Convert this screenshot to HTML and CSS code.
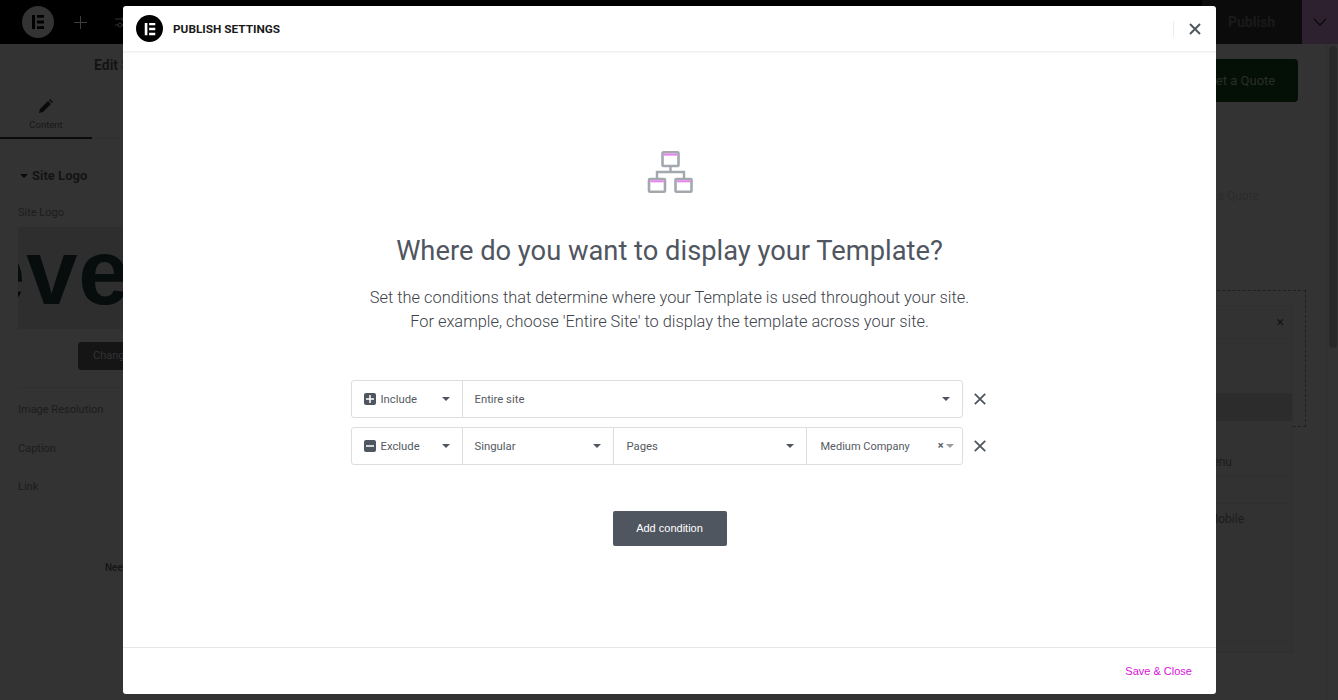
FILE: index.html
```html
<!DOCTYPE html>
<html lang="en">
<head>
    <meta charset="UTF-8">
    <meta name="viewport" content="width=device-width, initial-scale=1.0">
    <title>Publish Settings</title>
    <link rel="stylesheet" href="styles.css">
</head>
<body>
    <!-- Editor behind the dialog -->
    <header class="topbar">
        <div class="topbar-left">
            <span class="editor-logo">
                <svg width="16" height="16" viewBox="0 0 16 16"><path fill="#000" d="M2 1h3v14H2zM7 1h7v2.800H7zM7 6.600h7v2.800H7zM7 12.200h7V15H7z"/></svg>
            </span>
            <svg class="topbar-plus" width="13" height="13" viewBox="0 0 13 13"><path stroke="#3c3c3c" d="M6.500 0v13M0 6.500h13"/></svg>
            <svg class="topbar-sliders" width="14" height="12" viewBox="0 0 14 12"><path stroke="#333" fill="none" d="M0 3h14M0 9h14"/><circle cx="9" cy="3" r="2" fill="#000" stroke="#333"/><circle cx="5" cy="9" r="2" fill="#000" stroke="#333"/></svg>
        </div>
        <div class="topbar-right">
            <div class="publish">Publish</div>
            <div class="publish-more">
                <svg width="14" height="8" viewBox="0 0 14 8"><path d="M1 1l6 6 6-6" fill="none" stroke="#0a0a0a" stroke-width="1.300"/></svg>
            </div>
        </div>
    </header>

    <div class="editor">
        <aside class="panel">
            <div class="panel-title">Edit Site Logo</div>
            <div class="panel-tabs">
                <div class="tab">
                    <svg width="14" height="14" viewBox="0 0 14 14"><path fill="#0a0a0a" d="M0 14l1-4 8-8 3 3-8 8zM10 1l1-1 3 3-1 1z"/></svg>
                    <span>Content</span>
                </div>
            </div>
            <div class="section-title"><span class="caret-dark"></span>Site Logo</div>
            <div class="control-label">Site Logo</div>
            <div class="logo-preview"><span>eve</span></div>
            <div class="change-btn">Change</div>
            <div class="control-list">
                <div>Image Resolution</div>
                <div>Caption</div>
                <div>Link</div>
            </div>
            <div class="need-help">Need Help</div>
        </aside>

        <main class="canvas">
            <div class="quote-btn">Get a Quote</div>
            <div class="quote-ghost">Get a Quote</div>
            <div class="drop-zone"></div>
            <div class="menu-card">
                <div class="card-close">&times;</div>
                <div class="card-row card-head"></div>
                <div class="card-row card-highlight"></div>
                <div class="card-row card-menu">Menu</div>
                <div class="card-row card-blank"></div>
                <div class="card-row card-mobile">Mobile</div>
            </div>
            <div class="scroll-track"><div class="scroll-thumb"></div></div>
        </main>
    </div>

    <!-- Publish settings dialog -->
    <div class="modal">
        <div class="modal-header">
            <span class="modal-logo">
                <svg width="14" height="14" viewBox="0 0 16 16"><path fill="#fff" d="M2 1h3v14H2zM7 1h7v2.800H7zM7 6.600h7v2.800H7zM7 12.200h7V15H7z"/></svg>
            </span>
            <span class="modal-title">PUBLISH SETTINGS</span>
            <span class="modal-divider"></span>
            <svg class="modal-close" width="12" height="12" viewBox="0 0 12 12"><path d="M1 1l10 10M11 1L1 11" stroke="#4f565f" stroke-width="2"/></svg>
        </div>

        <div class="modal-body">
            <svg class="sitemap" width="46" height="42" viewBox="0 0 46 42">
                <path d="M23.500 15v6M10 27v-6h27v6" fill="none" stroke="#a3a7ae" stroke-width="2.400"/>
                <g fill="#fff" stroke="#a3a7ae" stroke-width="2.600">
                    <rect x="15.500" y="1.300" width="16" height="13.700" rx="1"/>
                    <rect x="2" y="28" width="16" height="12.700" rx="1"/>
                    <rect x="28.500" y="28" width="16" height="12.700" rx="1"/>
                </g>
                <g fill="#e87ff0">
                    <rect x="16.800" y="2.600" width="13.400" height="2"/>
                    <rect x="3.300" y="29.300" width="13.400" height="2"/>
                    <rect x="29.800" y="29.300" width="13.400" height="2"/>
                </g>
            </svg>
            <h1 class="modal-heading">Where do you want to display your Template?</h1>
            <p class="modal-text">Set the conditions that determine where your Template is used throughout your site.<br>For example, choose 'Entire Site' to display the template across your site.</p>

            <div class="conditions">
                <div class="condition">
                    <div class="condition-box">
                        <div class="field field-type">
                            <span class="type-icon">
                                <svg width="8" height="8" viewBox="0 0 8 8"><path d="M4 0v8M0 4h8" stroke="#fff" stroke-width="1.500"/></svg>
                            </span>
                            <span class="field-text">Include</span>
                            <span class="caret"></span>
                        </div>
                        <div class="field field-grow">
                            <span class="field-text">Entire site</span>
                            <span class="caret"></span>
                        </div>
                    </div>
                    <svg class="condition-remove" width="12" height="12" viewBox="0 0 12 12"><path d="M.8.800l10.400 10.400M11.200.800L.8 11.200" stroke="#4f565f" stroke-width="1.800"/></svg>
                </div>
                <div class="condition">
                    <div class="condition-box">
                        <div class="field field-type">
                            <span class="type-icon">
                                <svg width="8" height="8" viewBox="0 0 8 8"><path d="M0 4h8" stroke="#fff" stroke-width="1.500"/></svg>
                            </span>
                            <span class="field-text">Exclude</span>
                            <span class="caret"></span>
                        </div>
                        <div class="field field-singular">
                            <span class="field-text">Singular</span>
                            <span class="caret"></span>
                        </div>
                        <div class="field field-pages">
                            <span class="field-text">Pages</span>
                            <span class="caret"></span>
                        </div>
                        <div class="field field-company">
                            <span class="field-text">Medium Company</span>
                            <span class="clear-x">&times;</span>
                            <span class="caret caret-light"></span>
                        </div>
                    </div>
                    <svg class="condition-remove" width="12" height="12" viewBox="0 0 12 12"><path d="M.8.800l10.400 10.400M11.200.800L.8 11.200" stroke="#4f565f" stroke-width="1.800"/></svg>
                </div>
            </div>

            <button class="add-condition">Add condition</button>
        </div>

        <div class="modal-footer">
            <a class="save-close">Save &amp; Close</a>
        </div>
    </div>
</body>
</html>
```

FILE: styles.css
```css
* {
    box-sizing: border-box;
}

html, body {
    height: 100%;
}

body {
    margin: 0;
    overflow: hidden;
    background: #333333;
    font-family: Roboto, sans-serif;
    color: #141414;
}

/* top bar */
.topbar {
    height: 44px;
    background: #000;
    display: flex;
    justify-content: space-between;
}

.topbar-left {
    display: flex;
    align-items: center;
    padding-left: 22px;
}

.editor-logo {
    width: 32px;
    height: 32px;
    border-radius: 50%;
    background: #333;
    display: flex;
    align-items: center;
    justify-content: center;
}

.topbar-plus {
    margin-left: 20px;
}

.topbar-sliders {
    margin-left: 28px;
}

.topbar-right {
    display: flex;
}

.publish {
    width: 100px;
    background: #0b0b0b;
    color: #1a1a1a;
    font-weight: 700;
    font-size: 14px;
    line-height: 44px;
    padding-left: 26px;
}

.publish-more {
    width: 36px;
    background: #2d2130;
    display: flex;
    align-items: center;
    justify-content: center;
}

/* editor behind the dialog */
.editor {
    height: 656px;
    display: flex;
}

.panel {
    width: 300px;
    flex-shrink: 0;
}

.panel-title {
    padding: 13px 0 0 94px;
    height: 48px;
    font-size: 14px;
    font-weight: 700;
    line-height: 17px;
}

.panel-tabs {
    height: 47px;
    border-bottom: 1px solid #2f2f2f;
}

.tab {
    width: 92px;
    height: 47px;
    border-bottom: 2px solid #0a0a0a;
    display: flex;
    flex-direction: column;
    align-items: center;
    padding-top: 7px;
    font-size: 9.500px;
    gap: 6px;
    color: #181818;
}

.section-title {
    display: flex;
    align-items: center;
    margin: 29px 0 0 20px;
    font-size: 13px;
    font-weight: 700;
    line-height: 16px;
}

.caret-dark {
    width: 0;
    height: 0;
    border: 4px solid transparent;
    border-top: 4px solid #0a0a0a;
    border-bottom: 0;
    margin-right: 4px;
}

.control-label {
    margin: 22px 0 0 18px;
    font-size: 11px;
    line-height: 14px;
    color: #1c1c1c;
}

.logo-preview {
    margin: 7px 0 0 18px;
    height: 102px;
    background: #2e2e2e;
    overflow: hidden;
    font-family: "Liberation Sans", sans-serif;
    font-weight: 700;
    font-size: 92px;
    line-height: 90px;
    letter-spacing: 1px;
    color: #070d0d;
    white-space: nowrap;
}

.logo-preview span {
    margin-left: -44px;
    display: block;
}

.change-btn {
    margin: 13px 0 0 78px;
    width: 90px;
    height: 28px;
    background: #151516;
    border-radius: 3px;
    color: #333;
    font-size: 11px;
    line-height: 28px;
    padding-left: 15px;
}

.control-list {
    margin: 17px 0 0 18px;
    border-top: 1px solid #2f2f2f;
    padding-top: 15px;
    font-size: 11px;
    line-height: 14px;
    color: #1c1c1c;
    display: flex;
    flex-direction: column;
    gap: 24.500px;
}

.need-help {
    margin: 67px 0 0 105px;
    font-size: 10px;
    font-weight: 500;
    line-height: 14px;
}

.canvas {
    flex: 1;
    position: relative;
}

.quote-btn {
    position: absolute;
    right: 40px;
    top: 15px;
    width: 130px;
    height: 43px;
    background: #041006;
    border-radius: 4px;
    color: #2a2d2a;
    font-size: 13px;
    line-height: 43px;
    padding-left: 39px;
}

.quote-ghost {
    position: absolute;
    right: 79px;
    top: 145px;
    font-size: 12px;
    color: #2c2c2c;
}

.drop-zone {
    position: absolute;
    right: 32px;
    top: 246px;
    width: 300px;
    height: 137px;
    border: 1px dashed #1f1f1f;
}

.menu-card {
    position: absolute;
    right: 45px;
    top: 261px;
    width: 300px;
    height: 348px;
    background: #323232;
    border: 1px solid #2f2f2f;
    border-radius: 3px;
    font-size: 12px;
}

.card-close {
    position: absolute;
    right: 8px;
    top: 9px;
    font-size: 14px;
    line-height: 14px;
    color: #141414;
}

.card-row {
    position: absolute;
    left: 0;
    right: 0;
    border-bottom: 1px solid #2f2f2f;
    text-align: right;
}

.card-head {
    top: 0;
    height: 33px;
}

.card-highlight {
    top: 87px;
    height: 28px;
    background: #2c2c2c;
    border-bottom: 0;
}

.card-menu {
    top: 149px;
    height: 21px;
    padding-right: 60px;
    color: #1c1c1c;
}

.card-blank {
    top: 170px;
    height: 28px;
}

.card-mobile {
    top: 206px;
    height: 130px;
    padding-right: 48px;
    color: #1c1c1c;
}

.scroll-track {
    position: absolute;
    right: 0;
    top: 0;
    width: 12px;
    height: 100%;
    border-left: 1px solid #2e2e2e;
}

.scroll-thumb {
    margin: 2px 1px 0 2px;
    height: 302px;
    background: #282828;
    border-radius: 4px;
}

/* dialog */
.modal {
    position: absolute;
    left: 123px;
    top: 6px;
    width: 1093px;
    height: 688px;
    background: #fff;
    border-radius: 3px;
    display: flex;
    flex-direction: column;
    color: #4f565f;
}

.modal-header {
    height: 46px;
    flex-shrink: 0;
    border-bottom: 1px solid #f0f0f0;
    box-shadow: 0 1px 1px rgba(0, 0, 0, 0.03);
    display: flex;
    align-items: center;
    padding: 0 15px 0 13px;
}

.modal-logo {
    width: 27px;
    height: 27px;
    border-radius: 50%;
    background: #000;
    display: flex;
    align-items: center;
    justify-content: center;
}

.modal-title {
    margin: 1px 0 0 10px;
    font-size: 11.800px;
    font-weight: 700;
    color: #1a1a1a;
    flex: 1;
}

.modal-divider {
    width: 1px;
    height: 16px;
    background: #ececec;
    margin-right: 15px;
}

.modal-body {
    flex: 1;
    display: flex;
    flex-direction: column;
    align-items: center;
    padding-top: 99px;
}

.sitemap {
    display: block;
}

.modal-heading {
    margin: 42px 0 0;
    font-size: 27.300px;
    line-height: 33px;
    font-weight: 400;
    color: #4f565f;
}

.modal-text {
    margin: 18px 0 0;
    font-size: 16.400px;
    line-height: 24px;
    font-weight: 300;
    text-align: center;
    color: #3d434a;
}

.conditions {
    margin-top: 46px;
    display: flex;
    flex-direction: column;
    gap: 9px;
}

.condition {
    display: flex;
    align-items: center;
    gap: 11px;
    padding-right: 3px;
}

.condition-box {
    width: 612px;
    height: 38px;
    border: 1px solid #dcdde0;
    border-radius: 3px;
    display: flex;
}

.field {
    display: flex;
    align-items: center;
    padding: 0 12px;
    border-right: 1px solid #dcdde0;
    font-size: 11.300px;
    color: #555a61;
}

.field:last-child {
    border-right: 0;
}

.field-text {
    flex: 1;
    white-space: nowrap;
}

.field-type {
    width: 111px;
}

.field-grow {
    flex: 1;
}

.field-singular {
    width: 151px;
}

.field-pages {
    width: 193px;
    padding-left: 13px;
}

.field-company {
    flex: 1;
    padding-right: 8px;
    padding-left: 14px;
    font-size: 11px;
}

.type-icon {
    width: 12px;
    height: 12px;
    border-radius: 2px;
    background: #4f565f;
    display: flex;
    align-items: center;
    justify-content: center;
    margin-right: 5px;
}

.caret {
    width: 0;
    height: 0;
    border: 4px solid transparent;
    border-top: 4px solid #4f565f;
    border-bottom: 0;
}

.caret-light {
    border-top-color: #9a9da2;
    margin-left: 1px;
}

.clear-x {
    font-size: 11px;
    font-weight: 700;
    line-height: 12px;
    margin-right: 1px;
}

.add-condition {
    margin-top: 46px;
    width: 114px;
    height: 35px;
    padding-bottom: 3px;
    background: #4f565f;
    border: 0;
    border-radius: 2px;
    color: #fff;
    font-family: "Liberation Sans", sans-serif;
    font-size: 11px;
}

.modal-footer {
    height: 47px;
    flex-shrink: 0;
    border-top: 1px solid #e6e6e6;
    display: flex;
    align-items: center;
    justify-content: flex-end;
    padding-right: 24px;
}

.save-close {
    font-family: "Liberation Sans", sans-serif;
    font-size: 11px;
    color: #d90fdc;
}
```
